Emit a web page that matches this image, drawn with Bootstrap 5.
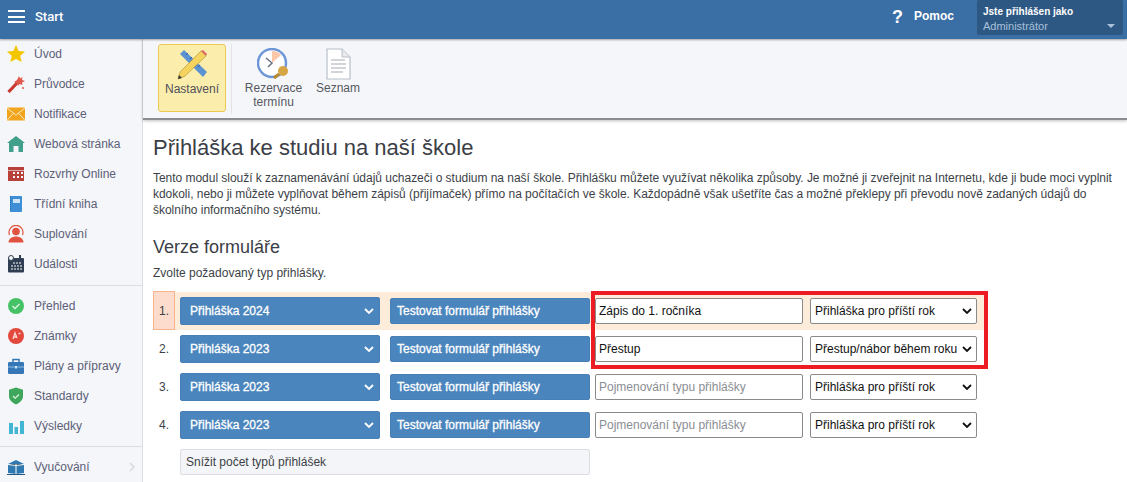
<!DOCTYPE html>
<html lang="cs">
<head>
  <meta charset="UTF-8" />
  <title>Přihláška ke studiu</title>
  <link href="https://cdn.jsdelivr.net/npm/bootstrap@5.3.0/dist/css/bootstrap.min.css" rel="stylesheet"/>
  <style>
    html, body { height: 100%; overflow: hidden; }
    body { font-family: "Liberation Sans", Arial, sans-serif; font-size: 12px; color: #3c3f47; background: #fff; }
    .top-bar { height: 39px; padding-bottom: 6px; background: #3a6fa5; color: #fff; box-shadow: 0 1px 2px rgba(0,0,0,.35); position: relative; z-index: 2; }
    .burger { width: 17px; height: 13px; margin: 0 10px 0 8px; border-top: 2px solid #fff; border-bottom: 2px solid #fff; position: relative; }
    .burger::after { content: ""; position: absolute; left: 0; right: 0; top: 3.5px; height: 2px; background: #fff; }
    .start-label { font-family: Roboto, sans-serif; font-size: 13px; font-weight: 500; }
    .help-mark { font-size: 18px; font-weight: 700; margin-right: 11px; line-height: 1; }
    .help-label { font-size: 12px; font-weight: 700; margin-right: 23px; margin-top: -1px; }
    .user-box { width: 146px; height: 35px; margin-top: 1px; background: #2d5884; border-radius: 2px; margin-right: 4px; padding: 5px 6px 0; position: relative; line-height: 14px; font-size: 11px; }
    .user-box b { display: block; font-size: 10px; }
    .user-box span { color: #a9c1da; }
    .user-box::after { content: ""; position: absolute; right: 8px; top: 24px; border: 4px solid transparent; border-top: 4px solid #a9c1da; }

    .side-menu { width: 143px; flex: none; background: #f5f6f9; border-right: 1px solid #dcdde0; }
    .side-item { height: 30px; display: flex; align-items: center; color: #5c6078; font-size: 12px; }
    .side-item svg { width: 18px; height: 18px; margin-left: 7px; margin-right: 9px; flex: none; }
    .side-rule { height: 1px; background: #dcdde0; margin: 6px 0 5px; }
    .side-rule-low { margin-top: 5px; }

    .tool-bar { height: 81px; flex: none; background: #f5f6f9; border-bottom: 2px solid #8b8c8e; box-shadow: 0 1px 3px rgba(0,0,0,.25); padding: 5px 0 0 15px; color: #55585f; }
    .tool-btn { height: 68px; text-align: center; line-height: 14px; padding-top: 4px; }
    .tool-btn svg { display: block; margin: 0 auto; }
    .tool-active { width: 68px; background: #fbedab; border: 1px solid #edc952; border-radius: 3px; color: #50505a; }
    .tool-sep { width: 1px; height: 70px; background: #e3e3e6; margin: 0 11px 0 5px; }
    .tool-wide { width: 61px; margin-right: 11px; }
    .tool-narrow { width: 46px; }

    .main-area { padding: 15px 0 0 10px; flex: 1; min-width: 0; position: relative; }
    .page-title { font-size: 22px; font-weight: 400; color: #3b3e46; margin: 0 0 9px; line-height: 26px; }
    .page-text { line-height: 16px; margin: 0 0 18px; width: 970px; letter-spacing: -.03px; }
    .sub-title { font-size: 18px; font-weight: 400; margin: 0 0 7px; line-height: 22px; color: #3b3e46; }
    .page-hint { margin: 0 0 11px; line-height: 16px; }

    .form-line { height: 38px; display: flex; align-items: center; width: 835px; }
    .line-current { background: #fdecd9; }
    .line-no { width: 22px; height: 39px; flex: none; margin-right: 5px; display: flex; align-items: center; justify-content: center; font-size: 12px; }
    .line-current .line-no { background: #fddccd; border: 1px solid #f7b48a; margin-top: -1px; }
    .type-pick { width: 200px; height: 28px; flex: none; background: #4b85bd; border: 1px solid #477fb6; border-radius: 2px; color: #fff; font-size: 12px; -webkit-text-stroke: .3px #fff; display: flex; align-items: center; justify-content: space-between; padding: 0 5px 0 9px; }
    .test-btn { width: 200px; height: 26px; flex: none; margin-left: 10px; background: #4b85bd; border: 1px solid #477fb6; border-radius: 2px; color: #fff; font-size: 12px; -webkit-text-stroke: .3px #fff; padding: 0 0 0 6px; text-align: left; line-height: 24px; }
    .type-name { width: 208px; height: 26px; flex: none; margin-left: 5px; border: 1px solid #8a8a8a; border-radius: 2px; font-size: 12px; padding: 0 3px; color: #111; background: #fff; }
    .type-name::placeholder { color: #8a8d93; opacity: 1; }
    .year-pick { width: 167px; height: 26px; flex: none; margin-left: 7px; border: 1px solid #8a8a8a; border-radius: 2px; font-size: 12px; color: #111; background: #fff; padding: 0 4px; display: flex; align-items: center; justify-content: space-between; }
    .less-btn { width: 410px; height: 26px; margin: 5px 0 0 27px; background: #f4f5f8; border: 1px solid #dcdde0; border-radius: 2px; line-height: 24px; padding-left: 5px; font-size: 12px; color: #3c3f47; }
    .red-frame { position: absolute; left: 448px; top: 171px; width: 397px; height: 78px; border: 4px solid #ed1c24; pointer-events: none; }
    .side-item .side-chevron { width: 6px; height: 10px; margin: 0 7px 0 0; }
    .tool-caption { margin-top: 1px; }
    .tool-clock { margin-left: 14px !important; }
    .main-column { min-width: 0; }
    .page-body { height: 443px; }
  </style>
</head>
<body>

<div class="top-bar d-flex align-items-center">
  <div class="burger"></div>
  <div class="start-label flex-grow-1">Start</div>
  <div class="help-mark">?</div>
  <div class="help-label">Pomoc</div>
  <div class="user-box"><b>Jste přihlášen jako</b><span>Administrátor</span></div>
</div>

<div class="d-flex page-body">
  <div class="side-menu">
    <div class="side-item"><svg viewBox="0 0 18 18"><path fill="#f3c600" d="M9 0l2.700 5.900 6.300.7-4.700 4.200 1.300 6.200L9 13.900 3.400 17l1.300-6.200L0 6.600l6.300-.7z"/></svg>Úvod</div>
    <div class="side-item"><svg viewBox="0 0 18 18"><path stroke="#c9392f" stroke-width="3.200" d="M1.500 17L10 8"/><path fill="#e2574c" d="M12 1l1 2.500L15.500 2 15 5l3 1-3 1.500.5 2.500-3-1-1.500 2-1-3-3-1 3-2z"/><circle cx="16" cy="13" r="1" fill="#e2574c"/></svg>Průvodce</div>
    <div class="side-item"><svg viewBox="0 0 18 18"><rect y="2.500" width="18" height="13" fill="#f1a41e"/><path fill="none" stroke="#fde7b8" d="M0 3l9 7 9-7M0 15.500l6.500-7.500M18 15.500L11.500 8"/></svg>Notifikace</div>
    <div class="side-item"><svg viewBox="0 0 18 18"><path fill="#41a08b" d="M9 1L0 8h2v9h4.500v-6h5v6H16V8h2z"/></svg>Webová stránka</div>
    <div class="side-item"><svg viewBox="0 0 18 18"><rect x="1" y="2" width="16" height="14" fill="#b8403a"/><path fill="#f5f6f9" d="M6 7h2v2H6zM10 7h2v2h-2zM14 7h2v2h-2zM6 11h2v2H6zM10 11h2v2h-2zM14 11h2v2h-2z"/><path stroke="#f5f6f9" stroke-width=".6" d="M1 5.500h16"/></svg>Rozvrhy Online</div>
    <div class="side-item"><svg viewBox="0 0 18 18"><rect x="3" y="1" width="12" height="16" rx="1" fill="#3f8fd6"/><rect x="6" y="4" width="7" height="4" fill="#cfe4f6"/><path stroke="#1f6aa9" stroke-dasharray="1 1" d="M3.500 1v16"/></svg>Třídní kniha</div>
    <div class="side-item"><svg viewBox="0 0 18 18"><path fill="none" stroke="#e2533f" stroke-width="1.200" d="M2.500 10a7 7 0 1 1 13 0"/><circle cx="9" cy="6.500" r="3.800" fill="#e2533f"/><path fill="#e2533f" d="M1.500 17.500c0-4 4-6 7.500-6s7.500 2 7.500 6z"/></svg>Suplování</div>
    <div class="side-item"><svg viewBox="0 0 18 18"><rect x="1" y="3" width="16" height="14.500" rx="1" fill="#2f3e52"/><circle cx="4" cy="3" r="2.500" fill="#f5f6f9" stroke="#2f3e52"/><path stroke="#2f3e52" stroke-width="2" d="M13 0v4"/><path stroke="#fff" stroke-dasharray="2 1" d="M6 8h9M4 11h11M4 14h11"/></svg>Události</div>
    <div class="side-rule"></div>
    <div class="side-item"><svg viewBox="0 0 18 18"><circle cx="9" cy="9" r="8" fill="#45c266"/><path fill="none" stroke="#dff5e5" stroke-width="1.300" d="M5.500 9l2.500 2.500 4.500-4.500"/></svg>Přehled</div>
    <div class="side-item"><svg viewBox="0 0 18 18"><circle cx="9" cy="9" r="8" fill="#e2483c"/><path fill="none" stroke="#fbd8d4" stroke-width="1.300" d="M6 12l2-6 2 5M11.500 6.500h2M7 10h2.500"/></svg>Známky</div>
    <div class="side-item"><svg viewBox="0 0 18 18"><rect x="1" y="5" width="16" height="12" rx="1" fill="#3578b5"/><path fill="none" stroke="#3578b5" stroke-width="1.500" d="M6 5V2.500h6V5"/><path stroke="#8fbde4" d="M1 10h16"/><rect x="8" y="9" width="2" height="2.500" fill="#cfe4f6"/></svg>Plány a přípravy</div>
    <div class="side-item"><svg viewBox="0 0 18 18"><path fill="#3fa75b" d="M9 .5l7 2.200V9c0 4-3 6.800-7 8.500C5 15.800 2 13 2 9V2.700z"/><path fill="none" stroke="#dff5e5" stroke-width="1.200" d="M6 9l2.200 2.200L12 7.500"/></svg>Standardy</div>
    <div class="side-item"><svg viewBox="0 0 18 18"><path fill="#40b6d3" d="M2 6h4v11H2zM7.500 10h3.500v7H7.500zM13 4h4v13h-4z"/></svg>Výsledky</div>
    <div class="side-rule side-rule-low"></div>
    <div class="side-item"><svg viewBox="0 0 18 18"><path fill="#2f78b0" d="M1 6l8-4 8 4v9l-8 1-8-1z"/><path stroke="#fff" d="M9 6v10M1 6.500l8 1 8-1"/><path stroke="#1f5a88" d="M0 16.500h18"/></svg><span class="flex-grow-1">Vyučování</span><svg class="side-chevron" viewBox="0 0 6 10"><path fill="none" stroke="#d3d5d9" stroke-width="1.300" d="M1 1l4 4-4 4"/></svg></div>
  </div>

  <div class="flex-grow-1 d-flex flex-column main-column">
    <div class="tool-bar d-flex">
      <div class="tool-btn tool-active">
        <svg width="32" height="32" viewBox="0 0 32 32"><path fill="#5b92d2" d="M4 5l4-4 23 22-4 5z"/><path stroke="#2d5e96" d="M10 6l2-2M14 10l2-2M18 14l2-2M22 18l2-2"/><path fill="#f4d35e" stroke="#a98d2e" stroke-width=".6" d="M25 2l5 5L9 27l-7 3 2-7z"/><path fill="#e0696b" d="M25 2l2-1 4 4-1 2z"/><path fill="#333" d="M2 30l1-4 3 3z"/></svg>
        <div class="tool-caption">Nastavení</div>
      </div>
      <div class="tool-sep"></div>
      <div class="tool-btn tool-wide">
        <svg class="tool-clock" width="32" height="32" viewBox="0 0 32 32"><circle cx="15" cy="15" r="14" fill="#fff" stroke="#6d97d6" stroke-width="2.500"/><path fill="#fbc9a9" d="M15 3a12 12 0 0 1 9 4l-9 8z"/><path fill="none" stroke="#6a7386" stroke-width="1.500" d="M9 10l6 5-4 4"/><circle cx="26" cy="23" r="5" fill="#d6a645"/><path stroke="#b6892f" stroke-width="3" d="M22 26l-5 4"/></svg>
        <div class="tool-caption">Rezervace termínu</div>
      </div>
      <div class="tool-btn tool-narrow">
        <svg width="32" height="32" viewBox="0 0 32 32"><path fill="#fff" stroke="#b8bfca" stroke-width="1.200" d="M5 1h15l8 8v22H5z"/><path fill="#e6e9ee" stroke="#b8bfca" d="M20 1v8h8"/><path stroke="#a4a9b2" d="M9 12h14M9 16h15M9 20h15M9 24h12"/></svg>
        <div class="tool-caption">Seznam</div>
      </div>
    </div>

    <div class="main-area">
      <h1 class="page-title">Přihláška ke studiu na naší škole</h1>
      <p class="page-text">Tento modul slouží k zaznamenávání údajů uchazeči o studium na naší škole. Přihlášku můžete využívat několika způsoby. Je možné ji zveřejnit na Internetu, kde ji bude moci vyplnit kdokoli, nebo ji můžete vyplňovat během zápisů (přijímaček) přímo na počítačích ve škole. Každopádně však ušetříte čas a možné překlepy při převodu nově zadaných údajů do školního informačního systému.</p>
      <h2 class="sub-title">Verze formuláře</h2>
      <p class="page-hint">Zvolte požadovaný typ přihlášky.</p>

      <div class="form-line line-current">
        <div class="line-no">1.</div>
        <div class="type-pick">Přihláška 2024 <svg width="10" height="6" viewBox="0 0 10 6"><path fill="none" stroke="#fff" stroke-width="1.800" d="M1 1l4 4 4-4"/></svg></div>
        <button class="test-btn">Testovat formulář přihlášky</button>
        <input class="type-name" value="Zápis do 1. ročníka">
        <div class="year-pick">Přihláška pro příští rok <svg width="10" height="6" viewBox="0 0 10 6"><path fill="none" stroke="#111" stroke-width="1.800" d="M1 1l4 4 4-4"/></svg></div>
      </div>
      <div class="form-line">
        <div class="line-no">2.</div>
        <div class="type-pick">Přihláška 2023 <svg width="10" height="6" viewBox="0 0 10 6"><path fill="none" stroke="#fff" stroke-width="1.800" d="M1 1l4 4 4-4"/></svg></div>
        <button class="test-btn">Testovat formulář přihlášky</button>
        <input class="type-name" value="Přestup">
        <div class="year-pick">Přestup/nábor během roku <svg width="10" height="6" viewBox="0 0 10 6"><path fill="none" stroke="#111" stroke-width="1.800" d="M1 1l4 4 4-4"/></svg></div>
      </div>
      <div class="form-line">
        <div class="line-no">3.</div>
        <div class="type-pick">Přihláška 2023 <svg width="10" height="6" viewBox="0 0 10 6"><path fill="none" stroke="#fff" stroke-width="1.800" d="M1 1l4 4 4-4"/></svg></div>
        <button class="test-btn">Testovat formulář přihlášky</button>
        <input class="type-name" placeholder="Pojmenování typu přihlášky">
        <div class="year-pick">Přihláška pro příští rok <svg width="10" height="6" viewBox="0 0 10 6"><path fill="none" stroke="#111" stroke-width="1.800" d="M1 1l4 4 4-4"/></svg></div>
      </div>
      <div class="form-line">
        <div class="line-no">4.</div>
        <div class="type-pick">Přihláška 2023 <svg width="10" height="6" viewBox="0 0 10 6"><path fill="none" stroke="#fff" stroke-width="1.800" d="M1 1l4 4 4-4"/></svg></div>
        <button class="test-btn">Testovat formulář přihlášky</button>
        <input class="type-name" placeholder="Pojmenování typu přihlášky">
        <div class="year-pick">Přihláška pro příští rok <svg width="10" height="6" viewBox="0 0 10 6"><path fill="none" stroke="#111" stroke-width="1.800" d="M1 1l4 4 4-4"/></svg></div>
      </div>
      <div class="less-btn">Snížit počet typů přihlášek</div>
      <div class="red-frame"></div>
    </div>
  </div>
</div>

<script src="https://cdn.jsdelivr.net/npm/bootstrap@5.3.0/dist/js/bootstrap.bundle.min.js"></script>
</body>
</html>
